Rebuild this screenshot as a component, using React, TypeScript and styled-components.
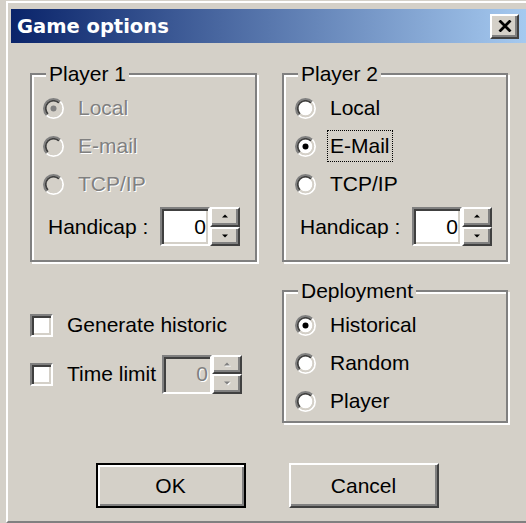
import React from 'react'
import styled, { createGlobalStyle } from 'styled-components'

const FACE = '#d4d0c8'
const SHADOW = '#808080'
const DARK = '#404040'
const LIGHT = '#ffffff'

const GlobalStyle = createGlobalStyle`
  html, body {
    margin: 0;
    padding: 0;
    background: ${FACE};
    overflow: hidden;
  }
  body {
    font-family: "Liberation Sans", Arial, sans-serif;
    font-size: 21px;
    color: #000;
  }
`

const Window = styled.div`
  box-sizing: border-box;
  width: 524px;
  height: 522px;
  margin: 1px 0 0 6px;
  padding: 6px 3px 0 3px;
  border-top: 2px solid ${LIGHT};
  border-left: 2px solid ${LIGHT};
  border-bottom: 2px solid ${SHADOW};
  background: ${FACE};
`

const TitleBar = styled.div`
  height: 34px;
  display: flex;
  align-items: center;
  justify-content: space-between;
  padding: 0 8px 0 6px;
  background: linear-gradient(to right, #0a246a, #a6caf0);
`

const TitleText = styled.span`
  font-family: "DejaVu Sans", Verdana, sans-serif;
  font-weight: bold;
  font-size: 19.5px;
  color: #fff;
`

const raised = `
  border-top: 2px solid ${LIGHT};
  border-left: 2px solid ${LIGHT};
  border-right: 2px solid ${DARK};
  border-bottom: 2px solid ${DARK};
  box-shadow: inset -2px -2px 0 ${SHADOW};
`

const sunken = `
  border-top: 2px solid ${SHADOW};
  border-left: 2px solid ${SHADOW};
  border-right: 2px solid ${LIGHT};
  border-bottom: 2px solid ${LIGHT};
  box-shadow: inset 2px 2px 0 ${DARK}, inset -2px -2px 0 ${FACE};
`

const CloseButton = styled.div`
  box-sizing: border-box;
  width: 29px;
  height: 25px;
  background: ${FACE};
  display: flex;
  align-items: center;
  justify-content: center;
  ${raised}
`

const Body = styled.div`
  padding-top: 19px;
`

const Grid = styled.div`
  display: grid;
  grid-template-columns: 227px 226px;
  column-gap: 25px;
  row-gap: 17px;
  margin-left: 19px;
`

const GroupBox = styled.div`
  box-sizing: border-box;
  margin-top: 11px;
  padding: 0 0 1px 11px;
  border: 2px solid ${SHADOW};
  box-shadow: inset 2px 2px 0 ${LIGHT}, 2px 2px 0 ${LIGHT};
  display: flex;
  flex-direction: column;
`

const GroupTitle = styled.span`
  align-self: flex-start;
  margin: -13px 0 3px 3px;
  padding: 0 3px;
  line-height: 24px;
  background: ${FACE};
`

const OptionRow = styled.div<{ $disabled?: boolean }>`
  display: flex;
  align-items: center;
  height: 38px;
  color: ${({ $disabled }) => ($disabled ? SHADOW : '#000')};
  text-shadow: ${({ $disabled }) => ($disabled ? `1px 1px 0 ${LIGHT}` : 'none')};
`

const OptionText = styled.span<{ $focused?: boolean }>`
  margin-left: 11px;
  padding: 3px 2px;
  line-height: 24px;
  border: 1px dotted ${({ $focused }) => ($focused ? '#000' : 'transparent')};
`

const FieldRow = styled.div`
  display: flex;
  align-items: center;
  height: 41px;
  margin: 3px 0 12px;
  padding-left: 5px;
`

const FieldLabel = styled.span<{ $width?: number }>`
  width: ${({ $width }) => ($width ? `${$width}px` : 'auto')};
  margin-right: ${({ $width }) => ($width ? 0 : 6)}px;
`

const Spin = styled.div`
  display: flex;
`

const EditBox = styled.div<{ $disabled?: boolean }>`
  box-sizing: border-box;
  width: 50px;
  height: 39px;
  ${sunken}
  background: ${({ $disabled }) => ($disabled ? FACE : LIGHT)};
  color: ${({ $disabled }) => ($disabled ? SHADOW : '#000')};
  text-shadow: ${({ $disabled }) => ($disabled ? `1px 1px 0 ${LIGHT}` : 'none')};
  display: flex;
  align-items: center;
  justify-content: flex-end;
  padding-right: 2px;
`

const SpinButtons = styled.div`
  display: flex;
  flex-direction: column;
  width: 30px;
  height: 39px;
`

const SpinButton = styled.div`
  box-sizing: border-box;
  flex: 1;
  background: ${FACE};
  display: flex;
  align-items: center;
  justify-content: center;
  ${raised}
`

const LeftColumn = styled.div`
  display: flex;
  flex-direction: column;
  gap: 11px;
  padding-top: 27px;
`

const CheckRow = styled.div`
  display: flex;
  align-items: center;
  height: 38px;
`

const CheckBox = styled.div`
  box-sizing: border-box;
  width: 23px;
  height: 23px;
  margin-right: 14px;
  background: ${LIGHT};
  ${sunken}
`

const ButtonRow = styled.div`
  display: flex;
  justify-content: center;
  gap: 43px;
  margin-top: 40px;
  padding-right: 4px;
`

const PushButton = styled.div<{ $default?: boolean }>`
  box-sizing: border-box;
  width: 150px;
  height: 45px;
  display: flex;
  align-items: center;
  justify-content: center;
  background: ${FACE};
  ${({ $default }) =>
    $default
      ? `border: 2px solid #000; box-shadow: inset 2px 2px 0 ${LIGHT}, inset -2px -2px 0 ${SHADOW};`
      : raised}
`

const RadioMark: React.FC<{ checked?: boolean; disabled?: boolean }> = ({ checked, disabled }) => (
  <svg width="21" height="21" viewBox="0 0 21 21">
    <circle cx="10.5" cy="10.5" r="7" fill={disabled ? FACE : LIGHT} />
    <path d="M3.71 17.29 A9.6 9.6 0 0 1 17.29 3.71" fill="none" stroke={SHADOW} strokeWidth="1.8" />
    <path d="M17.29 3.71 A9.6 9.6 0 0 1 3.71 17.29" fill="none" stroke={LIGHT} strokeWidth="1.8" />
    <path d="M4.98 16.02 A7.8 7.8 0 0 1 16.02 4.98" fill="none" stroke={DARK} strokeWidth="1.8" />
    <path d="M16.02 4.98 A7.8 7.8 0 0 1 4.98 16.02" fill="none" stroke={FACE} strokeWidth="1.8" />
    {checked && <circle cx="10.5" cy="10.5" r="3" fill={disabled ? SHADOW : '#000'} />}
  </svg>
)

const Arrow: React.FC<{ up?: boolean; disabled?: boolean }> = ({ up, disabled }) => (
  <svg width="7" height="5" viewBox="0 0 7 5">
    {disabled && <polygon points={up ? '1,4.5 7,4.5 4,1.5' : '1,1.5 7,1.5 4,4.5'} fill={LIGHT} />}
    <polygon points={up ? '0,3.5 6,3.5 3,0.5' : '0,0.5 6,0.5 3,3.5'} fill={disabled ? SHADOW : '#000'} />
  </svg>
)

const SpinEdit: React.FC<{ value: number; disabled?: boolean }> = ({ value, disabled }) => (
  <Spin>
    <EditBox $disabled={disabled}>{value}</EditBox>
    <SpinButtons>
      <SpinButton>
        <Arrow up disabled={disabled} />
      </SpinButton>
      <SpinButton>
        <Arrow disabled={disabled} />
      </SpinButton>
    </SpinButtons>
  </Spin>
)

interface RadioProps {
  label: string
  checked?: boolean
  disabled?: boolean
  focused?: boolean
}

const Radio: React.FC<RadioProps> = ({ label, checked, disabled, focused }) => (
  <OptionRow $disabled={disabled}>
    <RadioMark checked={checked} disabled={disabled} />
    <OptionText $focused={focused}>{label}</OptionText>
  </OptionRow>
)

const PlayerGroup: React.FC<{ title: string; options: RadioProps[] }> = ({ title, options }) => (
  <GroupBox>
    <GroupTitle>{title}</GroupTitle>
    {options.map((o) => (
      <Radio key={o.label} {...o} />
    ))}
    <FieldRow>
      <FieldLabel $width={112}>Handicap :</FieldLabel>
      <SpinEdit value={0} />
    </FieldRow>
  </GroupBox>
)

const App: React.FC = () => (
  <>
    <GlobalStyle />
    <Window>
      <TitleBar>
        <TitleText>Game options</TitleText>
        <CloseButton>
          <svg width="14" height="12" viewBox="0 0 14 12">
            <path d="M1.5 0.5 L12.5 11.5 M12.5 0.5 L1.5 11.5" stroke="#000" strokeWidth="2.8" />
          </svg>
        </CloseButton>
      </TitleBar>
      <Body>
        <Grid>
          <PlayerGroup
            title="Player 1"
            options={[
              { label: 'Local', checked: true, disabled: true },
              { label: 'E-mail', disabled: true },
              { label: 'TCP/IP', disabled: true },
            ]}
          />
          <PlayerGroup
            title="Player 2"
            options={[{ label: 'Local' }, { label: 'E-Mail', checked: true, focused: true }, { label: 'TCP/IP' }]}
          />
          <LeftColumn>
            <CheckRow>
              <CheckBox />
              Generate historic
            </CheckRow>
            <CheckRow>
              <CheckBox />
              <FieldLabel>Time limit</FieldLabel>
              <SpinEdit value={0} disabled />
            </CheckRow>
          </LeftColumn>
          <GroupBox>
            <GroupTitle>Deployment</GroupTitle>
            <Radio label="Historical" checked />
            <Radio label="Random" />
            <Radio label="Player" />
          </GroupBox>
        </Grid>
        <ButtonRow>
          <PushButton $default>OK</PushButton>
          <PushButton>Cancel</PushButton>
        </ButtonRow>
      </Body>
    </Window>
  </>
)

export default App
